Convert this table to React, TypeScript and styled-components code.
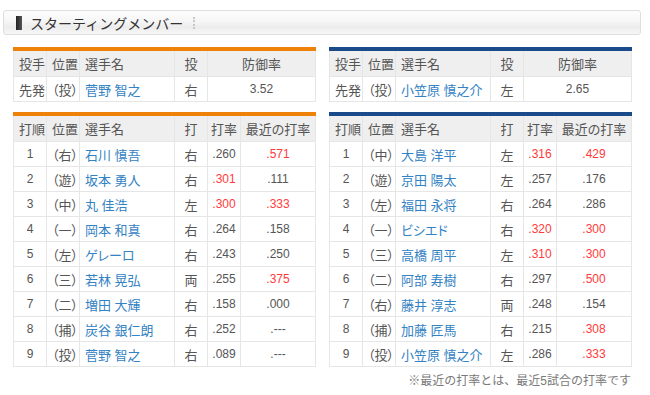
import React from "react";
import styled, { createGlobalStyle } from "styled-components";

const ORANGE = "#ee8208";
const NAVY = "#1b4a8a";
const BORDER = "#e6e6e6";
const NAME_BLUE = "#3382c4";
const RED = "#ff3b3b";

const GlobalStyle = createGlobalStyle`
  body {
    margin: 0;
    background: #fff;
    font-family: "Liberation Sans", "Noto Sans CJK JP", sans-serif;
    color: #555;
  }
`;

const Page = styled.div`
  width: 650px;
  padding: 10px 9px 0 3px;
  box-sizing: border-box;
`;

const TitleBar = styled.div`
  height: 25px;
  box-sizing: border-box;
  border: 1px solid #dedede;
  border-radius: 3px;
  background: linear-gradient(#fdfdfd 0%, #f6f6f6 45%, #ececec 70%, #f7f7f7 100%);
  display: flex;
  align-items: center;
  padding-left: 12px;
  gap: 8px;
`;

const TitleMark = styled.span`
  width: 6px;
  height: 14px;
  background: linear-gradient(90deg, #222, #555);
`;

const TitleText = styled.h2`
  margin: 0;
  font-size: 14px;
  font-weight: normal;
  color: #333;
`;

const Dots = styled.span`
  width: 0;
  height: 12px;
  border-left: 2px dotted #c8c8c8;
  margin-left: 2px;
`;

const Grid = styled.div`
  display: grid;
  grid-template-columns: 302px 302px;
  column-gap: 14px;
  row-gap: 10px;
  padding-left: 10px;
  margin-top: 12px;
`;

const Table = styled.table<{ $accent: string }>`
  width: 302px;
  border-collapse: collapse;
  table-layout: fixed;
  border-top: 4px solid ${(p) => p.$accent};
  font-size: 13px;
  font-feature-settings: "palt";
`;

const Th = styled.th`
  height: 25px;
  padding: 0 0 0 5px;
  background: #efefef;
  border: 1px solid ${BORDER};
  border-top: none;
  font-weight: normal;
  color: #555;
  text-align: left;
  white-space: nowrap;
  &.c {
    text-align: center;
    padding: 0;
  }
`;

const Td = styled.td`
  height: 24px;
  padding: 0 0 0 5px;
  border: 1px solid ${BORDER};
  color: #555;
  white-space: nowrap;
  &.c {
    text-align: center;
    padding: 0;
  }
`;

const Num = styled(Td)<{ $hot?: boolean }>`
  text-align: center;
  padding: 0;
  font-size: 12px;
  color: ${(p) => (p.$hot ? RED : "#555")};
`;

const Name = styled.span`
  color: ${NAME_BLUE};
`;

const Note = styled.p`
  margin: 4px 0 0;
  padding-right: 10px;
  text-align: right;
  font-size: 12px;
  color: #7a7a7a;
`;

type Pitcher = { name: string; hand: string; era: string };
type Batter = {
  order: number;
  pos: string;
  name: string;
  hand: string;
  avg: string;
  avgHot?: boolean;
  recent: string;
  recentHot?: boolean;
};

const pitchers: [Pitcher, Pitcher] = [
  { name: "菅野 智之", hand: "右", era: "3.52" },
  { name: "小笠原 慎之介", hand: "左", era: "2.65" },
];

const giants: Batter[] = [
  { order: 1, pos: "右", name: "石川 慎吾", hand: "右", avg: ".260", recent: ".571", recentHot: true },
  { order: 2, pos: "遊", name: "坂本 勇人", hand: "右", avg: ".301", avgHot: true, recent: ".111" },
  { order: 3, pos: "中", name: "丸 佳浩", hand: "左", avg: ".300", avgHot: true, recent: ".333", recentHot: true },
  { order: 4, pos: "一", name: "岡本 和真", hand: "右", avg: ".264", recent: ".158" },
  { order: 5, pos: "左", name: "ゲレーロ", hand: "右", avg: ".243", recent: ".250" },
  { order: 6, pos: "三", name: "若林 晃弘", hand: "両", avg: ".255", recent: ".375", recentHot: true },
  { order: 7, pos: "二", name: "増田 大輝", hand: "右", avg: ".158", recent: ".000" },
  { order: 8, pos: "捕", name: "炭谷 銀仁朗", hand: "右", avg: ".252", recent: ".---" },
  { order: 9, pos: "投", name: "菅野 智之", hand: "右", avg: ".089", recent: ".---" },
];

const dragons: Batter[] = [
  { order: 1, pos: "中", name: "大島 洋平", hand: "左", avg: ".316", avgHot: true, recent: ".429", recentHot: true },
  { order: 2, pos: "遊", name: "京田 陽太", hand: "左", avg: ".257", recent: ".176" },
  { order: 3, pos: "左", name: "福田 永将", hand: "右", avg: ".264", recent: ".286" },
  { order: 4, pos: "一", name: "ビシエド", hand: "右", avg: ".320", avgHot: true, recent: ".300", recentHot: true },
  { order: 5, pos: "三", name: "高橋 周平", hand: "左", avg: ".310", avgHot: true, recent: ".300", recentHot: true },
  { order: 6, pos: "二", name: "阿部 寿樹", hand: "右", avg: ".297", recent: ".500", recentHot: true },
  { order: 7, pos: "右", name: "藤井 淳志", hand: "両", avg: ".248", recent: ".154" },
  { order: 8, pos: "捕", name: "加藤 匠馬", hand: "右", avg: ".215", recent: ".308", recentHot: true },
  { order: 9, pos: "投", name: "小笠原 慎之介", hand: "左", avg: ".286", recent: ".333", recentHot: true },
];

function Cols({ last }: { last: number[] }) {
  return (
    <colgroup>
      <col style={{ width: 33 }} />
      <col style={{ width: 33 }} />
      <col style={{ width: 95 }} />
      <col style={{ width: 33 }} />
      {last.map((w, i) => (
        <col key={i} style={{ width: w }} />
      ))}
    </colgroup>
  );
}

function PitcherTable({ accent, p }: { accent: string; p: Pitcher }) {
  return (
    <Table $accent={accent}>
      <Cols last={[108]} />
      <thead>
        <tr>
          <Th>投手</Th>
          <Th>位置</Th>
          <Th>選手名</Th>
          <Th className="c">投</Th>
          <Th className="c">防御率</Th>
        </tr>
      </thead>
      <tbody>
        <tr>
          <Td>先発</Td>
          <Td>（投）</Td>
          <Td>
            <Name>{p.name}</Name>
          </Td>
          <Td className="c">{p.hand}</Td>
          <Num>{p.era}</Num>
        </tr>
      </tbody>
    </Table>
  );
}

function LineupTable({ accent, rows }: { accent: string; rows: Batter[] }) {
  return (
    <Table $accent={accent}>
      <Cols last={[33, 75]} />
      <thead>
        <tr>
          <Th>打順</Th>
          <Th>位置</Th>
          <Th>選手名</Th>
          <Th className="c">打</Th>
          <Th className="c">打率</Th>
          <Th className="c">最近の打率</Th>
        </tr>
      </thead>
      <tbody>
        {rows.map((b) => (
          <tr key={b.order}>
            <Num>{b.order}</Num>
            <Td>（{b.pos}）</Td>
            <Td>
              <Name>{b.name}</Name>
            </Td>
            <Td className="c">{b.hand}</Td>
            <Num $hot={b.avgHot}>{b.avg}</Num>
            <Num $hot={b.recentHot}>{b.recent}</Num>
          </tr>
        ))}
      </tbody>
    </Table>
  );
}

export default function App() {
  return (
    <>
      <GlobalStyle />
      <Page>
        <TitleBar>
          <TitleMark />
          <TitleText>スターティングメンバー</TitleText>
          <Dots />
        </TitleBar>
        <Grid>
          <PitcherTable accent={ORANGE} p={pitchers[0]} />
          <PitcherTable accent={NAVY} p={pitchers[1]} />
          <LineupTable accent={ORANGE} rows={giants} />
          <LineupTable accent={NAVY} rows={dragons} />
        </Grid>
        <Note>※最近の打率とは、最近5試合の打率です</Note>
      </Page>
    </>
  );
}
